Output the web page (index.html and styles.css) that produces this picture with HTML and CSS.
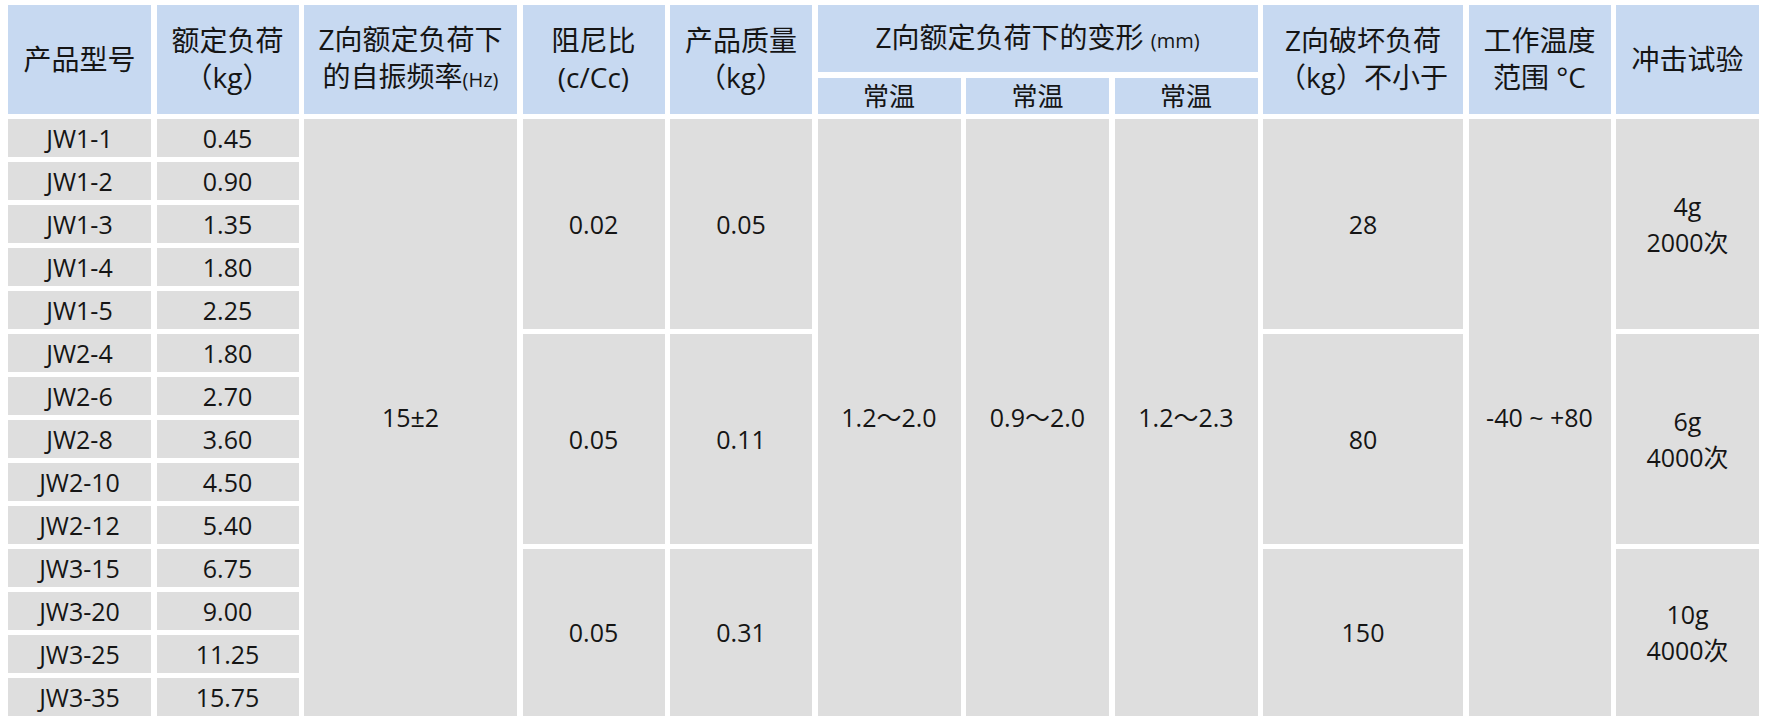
FILE: index.html
```html
<!DOCTYPE html>
<html lang="zh-CN">
<head>
<meta charset="utf-8">
<title>JW 系列参数表</title>
<link rel="stylesheet" href="styles.css">
</head>
<body>
<div class="table">
  <div class="cell head span-r2"><span>产品型号</span></div>
  <div class="cell head span-r2"><span>额定负荷<br>（kg）</span></div>
  <div class="cell head span-r2"><span>Z向额定负荷下<br>的自振频率<span class="small">(Hz)</span></span></div>
  <div class="cell head span-r2"><span>阻尼比<br>(c/Cc)</span></div>
  <div class="cell head span-r2"><span>产品质量<br>（kg）</span></div>
  <div class="cell head span-c3"><span>Z向额定负荷下的变形 <span class="small">(mm)</span></span></div>
  <div class="cell head span-r2"><span>Z向破坏负荷<br>（kg）不小于</span></div>
  <div class="cell head span-r2"><span>工作温度<br>范围 °C</span></div>
  <div class="cell head span-r2"><span>冲击试验</span></div>
  <div class="cell head sub"><span>常温</span></div>
  <div class="cell head sub"><span>常温</span></div>
  <div class="cell head sub"><span>常温</span></div>

  <div class="cell"><span>JW1-1</span></div>
  <div class="cell"><span>0.45</span></div>
  <div class="cell span-all"><span>15±2</span></div>
  <div class="cell span-g5"><span>0.02</span></div>
  <div class="cell span-g5"><span>0.05</span></div>
  <div class="cell span-all"><span>1.2～2.0</span></div>
  <div class="cell span-all"><span>0.9～2.0</span></div>
  <div class="cell span-all"><span>1.2～2.3</span></div>
  <div class="cell span-g5"><span>28</span></div>
  <div class="cell span-all"><span>-40 ~ +80</span></div>
  <div class="cell span-g5"><span>4g<br>2000次</span></div>

  <div class="cell"><span>JW1-2</span></div><div class="cell"><span>0.90</span></div>
  <div class="cell"><span>JW1-3</span></div><div class="cell"><span>1.35</span></div>
  <div class="cell"><span>JW1-4</span></div><div class="cell"><span>1.80</span></div>
  <div class="cell"><span>JW1-5</span></div><div class="cell"><span>2.25</span></div>

  <div class="cell"><span>JW2-4</span></div><div class="cell"><span>1.80</span></div>
  <div class="cell span-g5"><span>0.05</span></div>
  <div class="cell span-g5"><span>0.11</span></div>
  <div class="cell span-g5"><span>80</span></div>
  <div class="cell span-g5"><span>6g<br>4000次</span></div>
  <div class="cell"><span>JW2-6</span></div><div class="cell"><span>2.70</span></div>
  <div class="cell"><span>JW2-8</span></div><div class="cell"><span>3.60</span></div>
  <div class="cell"><span>JW2-10</span></div><div class="cell"><span>4.50</span></div>
  <div class="cell"><span>JW2-12</span></div><div class="cell"><span>5.40</span></div>

  <div class="cell"><span>JW3-15</span></div><div class="cell"><span>6.75</span></div>
  <div class="cell span-g4"><span>0.05</span></div>
  <div class="cell span-g4"><span>0.31</span></div>
  <div class="cell span-g4"><span>150</span></div>
  <div class="cell span-g4"><span>10g<br>4000次</span></div>
  <div class="cell"><span>JW3-20</span></div><div class="cell"><span>9.00</span></div>
  <div class="cell"><span>JW3-25</span></div><div class="cell"><span>11.25</span></div>
  <div class="cell"><span>JW3-35</span></div><div class="cell"><span>15.75</span></div>
</div>
</body>
</html>
```

FILE: styles.css
```css
html, body {
  margin: 0;
  padding: 0;
  background: #ffffff;
}

body {
  padding: 5px 0 0 8px;
  font-family: "Open Sans", "Noto Sans CJK SC", sans-serif;
  color: #151515;
}

.table {
  display: grid;
  grid-template-columns: 143px 142px 213px 142px 142px 143px 143px 143px 200px 142px 143px;
  grid-template-rows: 67px 36px repeat(14, 37.5px);
  column-gap: 5.5px;
  row-gap: 5.5px;
}

.cell {
  display: flex;
  align-items: center;
  justify-content: center;
  text-align: center;
  background: #dedede;
  font-size: 25px;
  line-height: 36px;
  white-space: nowrap;
}

.head {
  background: #c7d9f1;
  font-size: 28px;
  line-height: 37px;
}

.sub {
  font-size: 26px;
  padding-top: 2px;
}

.small {
  font-size: 20px;
}

.span-r2 { grid-row: span 2; }
.span-c3 { grid-column: span 3; }
.span-all { grid-row: span 14; }
.span-g5 { grid-row: span 5; }
.span-g4 { grid-row: span 4; }
```
